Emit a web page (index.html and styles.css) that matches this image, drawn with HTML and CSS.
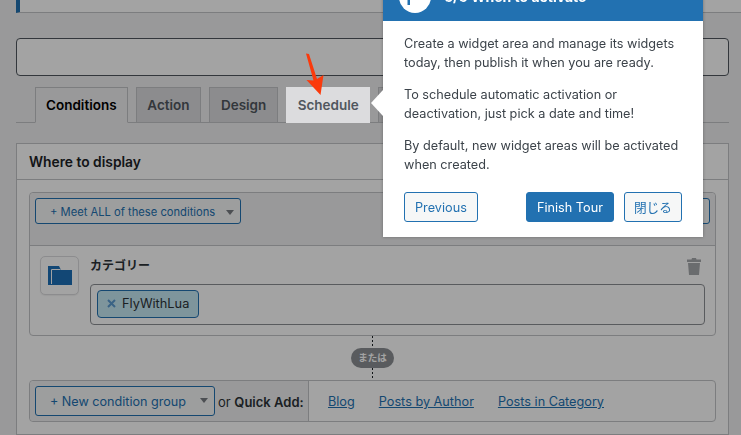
FILE: index.html
```html
<!DOCTYPE html>
<html lang="en">
<head>
  <meta charset="UTF-8" />
  <title>Widget area editor</title>
  <link rel="stylesheet" href="styles.css">
</head>
<body>
  <div class="notice"></div>
  <div class="title-input"></div>

  <div class="tabs">
    <span class="tab tab-active">Conditions</span>
    <span class="tab">Action</span>
    <span class="tab">Design</span>
    <span class="tab tab-lit">Schedule</span>
    <span class="tab tab-hidden"></span>
  </div>

  <section class="panel">
    <h2 class="panel-title">Where to display</h2>
    <div class="panel-body">
      <div class="group">
        <div class="group-bar">
          <span class="btn-select btn-meet">+ Meet ALL of these conditions<i class="caret"></i></span>
          <span class="btn-select btn-right"></span>
        </div>
        <div class="group-row">
          <div class="icon-box">
            <svg width="24" height="19" viewBox="0 0 24 19">
              <path class="folder" d="M0 0h11l2 4h11v15H0z"/>
              <path class="folder-lip" d="M3.500 18V3.500h9" />
            </svg>
          </div>
          <div class="row-main">
            <div class="row-head">
              <span class="row-title">カテゴリー</span>
              <svg class="trash" width="14" height="17" viewBox="0 0 14 17">
                <path d="M5 0h4l.5 1.500H14V4H0V1.500h4.500zM1 5h12l-1 12H2z"/>
              </svg>
            </div>
            <div class="token-box">
              <span class="token">
                <svg class="token-x" width="9" height="9" viewBox="0 0 9 9"><path d="M1 1l7 7M8 1l-7 7"/></svg>FlyWithLua
              </span>
            </div>
          </div>
        </div>
      </div>

      <div class="joiner"><span class="joiner-pill">または</span></div>

      <div class="add-bar">
        <div class="add-left">
          <span class="btn-select btn-new">+ New condition group<i class="caret"></i></span>
          <span class="or">or <strong>Quick Add:</strong></span>
        </div>
        <div class="add-links">
          <a href="#">Blog</a>
          <a href="#">Posts by Author</a>
          <a href="#">Posts in Category</a>
        </div>
      </div>
    </div>
  </section>

  <div class="overlay"></div>

  <svg class="arrow" width="24" height="46" viewBox="0 0 24 46">
    <path d="M1 1.500L4 2l8 25 6.500-4-3 20-14-15 7 .5z"/>
  </svg>

  <div class="tour">
    <span class="tour-tip"></span>
    <div class="tour-head">
      <span class="tour-badge">
        <svg width="32" height="32" viewBox="0 0 32 32"><path d="M8.500 8H11V24H8.500z"/></svg>
      </span>
      <h3 class="tour-title">6/6 When to activate</h3>
    </div>
    <div class="tour-body">
      <p>Create a widget area and manage its widgets today, then publish it when you are ready.</p>
      <p>To schedule automatic activation or deactivation, just pick a date and time!</p>
      <p>By default, new widget areas will be activated when created.</p>
      <div class="tour-actions">
        <a class="tour-btn" href="#">Previous</a>
        <a class="tour-btn tour-btn-primary" href="#">Finish Tour</a>
        <a class="tour-btn tour-btn-close" href="#">閉じる</a>
      </div>
    </div>
  </div>
</body>
</html>
```

FILE: styles.css
```css
/* Reset & base */
*, *::before, *::after {
  box-sizing: border-box;
}
html, body {
  height: 435px;
  overflow: hidden;
}
body {
  margin: 0;
  padding: 0 12px 0 16px;
  background: #f0f0f1;
  color: #1d2327;
  font-family: Inter, "Noto Sans CJK JP", sans-serif;
  font-size: 13px;
  position: relative;
}

/* Top of the page */
.notice {
  height: 13px;
  margin-right: -12px;
  background: #fff;
  border-left: 4px solid #2271b1;
  border-bottom: 1px solid #c3c4c7;
}
.title-input {
  height: 38px;
  margin-top: 25px;
  background: #fff;
  border: 1px solid #50575e;
  border-radius: 4px;
}

/* Tabs */
.tabs {
  display: flex;
  gap: 8px;
  height: 36px;
  margin-top: 11px;
  padding-left: 19px;
  border-bottom: 1px solid #c3c4c7;
}
.tab {
  height: 36px;
  padding: 0 10.700px;
  background: #dcdcde;
  border: 1px solid #c3c4c7;
  color: #50575e;
  font-size: 13.500px;
  font-weight: 600;
  line-height: 34px;
}
.tab-active {
  padding: 0 10px;
  background: #f0f0f1;
  border-bottom-color: #f0f0f1;
  color: #000;
}
.tab-lit {
  position: relative;
  z-index: 20;
  border-color: #dcdcde;
}
.tab-hidden {
  width: 60px;
}

/* Panel */
.panel {
  height: 292px;
  margin-top: 20px;
  background: #fff;
  border: 1px solid #c3c4c7;
}
.panel-title {
  height: 36px;
  margin: 0;
  padding: 0 12px;
  border-bottom: 1px solid #c3c4c7;
  font-size: 13.800px;
  font-weight: 600;
  line-height: 36px;
}
.panel-body {
  padding: 12px 12px 0;
}
.group {
  background: #fff;
  border: 1px solid #c3c4c7;
  border-radius: 4px;
}
.group-bar {
  display: flex;
  justify-content: space-between;
  height: 53px;
  padding: 5px;
  background: #f0f0f1;
  border-bottom: 1px solid #c3c4c7;
  border-radius: 4px 4px 0 0;
}
.btn-select {
  position: relative;
  display: inline-block;
  border: 1px solid #2271b1;
  border-radius: 3px;
  background: #f6f7f7;
  color: #2271b1;
  text-align: left;
  white-space: nowrap;
}
.btn-meet {
  width: 206px;
  height: 26px;
  padding-left: 14px;
  font-size: 11.200px;
  line-height: 26px;
}
.btn-right {
  width: 40px;
  height: 26px;
}
.caret {
  position: absolute;
  top: 11px;
  right: 6px;
  border-style: solid;
  border-color: #787c82 transparent transparent;
  border-width: 5px 4px 0;
}
.group-row {
  display: flex;
  gap: 11px;
  padding: 10px;
}
.icon-box {
  display: flex;
  align-items: center;
  justify-content: center;
  flex: none;
  width: 39px;
  height: 39px;
  border: 1px solid #dcdcde;
  border-radius: 5px;
  background: #fff;
  box-shadow: 0 1px 1px rgba(0, 0, 0, 0.06);
}
.folder {
  fill: #1d6fb8;
}
.folder-lip {
  fill: none;
  stroke: #fff;
  stroke-width: 1;
}
.row-main {
  flex: 1;
  min-width: 0;
}
.row-head {
  display: flex;
  justify-content: space-between;
  align-items: flex-start;
  height: 28px;
  padding: 2px 4px 0 0;
}
.row-title {
  color: #2c3338;
  font-size: 12px;
  font-weight: 600;
  line-height: 15px;
}
.trash {
  fill: #a7aaad;
}
.token-box {
  height: 41px;
  padding: 5px 6px;
  border: 1px solid #8c8f94;
  border-radius: 4px;
}
.token {
  display: inline-block;
  width: 102px;
  height: 28px;
  padding-left: 9px;
  background: #c5e9f5;
  border: 1px solid #2271b1;
  border-radius: 4px;
  color: #2c3338;
  font-size: 12.800px;
  line-height: 26px;
}
.token-x {
  margin-right: 6px;
  fill: none;
  stroke: #5c9bd0;
  stroke-width: 2;
}

/* Or joiner between groups */
.joiner {
  display: flex;
  justify-content: center;
  align-items: center;
  height: 44px;
  background: repeating-linear-gradient(#1d2327 0 2px, transparent 2px 4px) center / 1px 100% no-repeat;
}
.joiner-pill {
  width: 43px;
  height: 20px;
  border-radius: 10px;
  background: #8c8f94;
  color: #fff;
  font-size: 9.500px;
  font-weight: 700;
  line-height: 20px;
  text-align: center;
}

/* Quick add bar */
.add-bar {
  display: flex;
  height: 42px;
  background: #fff;
  border: 1px solid #c3c4c7;
  border-radius: 4px;
}
.add-left {
  display: flex;
  align-items: center;
  width: 279px;
  padding-left: 5px;
  background: #f0f0f1;
  border-right: 1px solid #c3c4c7;
  border-radius: 4px 0 0 4px;
}
.btn-new {
  width: 180px;
  height: 30px;
  padding-left: 14px;
  font-size: 12.600px;
  line-height: 30px;
}
.or {
  margin-left: 3px;
  padding-top: 1px;
  color: #2c3338;
  white-space: nowrap;
}
.or strong {
  font-weight: 600;
}
.add-links {
  display: flex;
  align-items: center;
  gap: 24px;
  padding: 1px 0 0 19px;
  font-size: 12.700px;
}
.add-links a {
  color: #2271b1;
}

/* Dim layer for the tour */
.overlay {
  position: fixed;
  top: 0;
  left: 0;
  right: 0;
  bottom: 0;
  z-index: 10;
  background: rgba(0, 0, 0, 0.36);
}
.arrow {
  position: absolute;
  top: 52px;
  left: 305px;
  z-index: 30;
  fill: #fb3a0c;
}

/* Tour popup */
.tour {
  position: absolute;
  top: -27px;
  left: 383px;
  z-index: 30;
  width: 320px;
  height: 264px;
  background: #fff;
  box-shadow: 0 0 3px rgba(0, 0, 0, 0.3);
}
.tour-tip {
  position: absolute;
  top: 117px;
  left: -12px;
  border: 13px solid transparent;
  border-left: 0;
  border-right: 12px solid #fff;
}
.tour-head {
  display: flex;
  align-items: center;
  height: 48px;
  padding-left: 16px;
  background: #2271b1;
}
.tour-badge {
  display: flex;
  width: 32px;
  height: 32px;
  border-radius: 50%;
  background: #fff;
  fill: #2271b1;
}
.tour-title {
  margin: -2px 0 0 13px;
  color: #fff;
  font-size: 14px;
  font-weight: 700;
}
.tour-body {
  padding: 13px 21px 0;
  color: #3c434a;
  font-size: 12.700px;
  line-height: 19px;
}
.tour-body p {
  margin: 0 0 13px;
}
.tour-actions {
  display: flex;
  gap: 10px;
  margin-top: 18px;
}
.tour-btn {
  height: 30px;
  padding: 0 10px;
  background: #f6f7f7;
  border: 1px solid #2271b1;
  border-radius: 3px;
  color: #2271b1;
  line-height: 30px;
  text-decoration: none;
}
.tour-btn-primary {
  margin-left: auto;
  background: #2271b1;
  color: #fff;
}
.tour-btn-close {
  padding: 0 9px;
}
```
